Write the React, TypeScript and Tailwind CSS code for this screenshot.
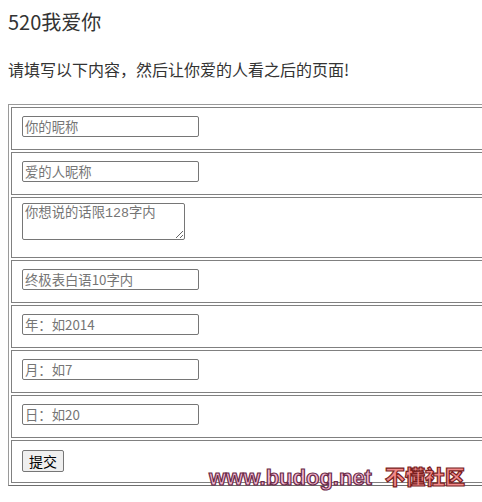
const fields = [
  { placeholder: "你的昵称", kind: "input" },
  { placeholder: "爱的人昵称", kind: "input" },
  { placeholder: "你想说的话限128字内", kind: "textarea" },
  { placeholder: "终极表白语10字内", kind: "input" },
  { placeholder: "年：如2014", kind: "input" },
  { placeholder: "月：如7", kind: "input" },
  { placeholder: "日：如20", kind: "input" },
];

export default function App() {
  return (
    <div className="relative w-[482px] h-[502px] overflow-hidden bg-white p-[8px] text-[#333] font-['Noto_Sans_CJK_SC','Noto_Sans',sans-serif]">
      <div className="text-[20px] leading-[28px]">520我爱你</div>
      <div className="text-[16px] leading-[24px] mt-[21px]">请填写以下内容，然后让你爱的人看之后的页面!</div>

      <table className="mt-[23px] w-[720px] border-separate border-spacing-[2px] border border-t-[#9a9a9a] border-l-[#9a9a9a] border-r-[#6e6e6e] border-b-[#6e6e6e]">
        <tbody>
          {fields.map((f) => (
            <tr key={f.placeholder}>
              {f.kind === "input" ? (
                <td className="border border-[#808080] px-[10px] pt-[8px] pb-[12px]">
                  <input
                    placeholder={f.placeholder}
                    className="block w-[177px] h-[21px] border border-[#767676] rounded-[2px] px-[2px] text-[13.33px] leading-[17px] text-black placeholder:text-[#757575] font-['Noto_Sans_CJK_SC',sans-serif] outline-none"
                  />
                </td>
              ) : (
                <td className="border border-[#808080] px-[10px] pt-[5px] pb-[17px]">
                  <textarea
                    placeholder={f.placeholder}
                    className="block w-[163px] h-[37px] border border-[#767676] rounded-[2px] px-[2px] py-[1px] text-[13.33px] leading-[17px] text-black placeholder:text-[#757575] font-['Liberation_Mono','Noto_Sans_CJK_SC',monospace] outline-none resize"
                  />
                </td>
              )}
            </tr>
          ))}
          <tr>
            <td className="border border-[#808080] px-[10px] pt-[9px] pb-[10px]">
              <button className="block w-[42px] h-[22px] bg-[#efefef] border border-[#767676] rounded-[2px] text-[14px] leading-[18px] text-black font-['Noto_Sans_CJK_SC',sans-serif]">
                提交
              </button>
            </td>
          </tr>
        </tbody>
      </table>

      <div className="absolute left-[209px] top-[467px] flex items-baseline gap-[13px] font-black leading-none">
        <span className="text-[22px] tracking-[0px] text-[#f6b8d2] [-webkit-text-stroke:1.2px_#6a2b48] font-['Liberation_Sans',sans-serif]">
          www.budog.net
        </span>
        <span className="text-[20px] tracking-[0px] text-[#f28a8a] [-webkit-text-stroke:1.2px_#7a1f1f] font-['Noto_Sans_CJK_SC',sans-serif]">
          不懂社区
        </span>
      </div>
    </div>
  );
}
